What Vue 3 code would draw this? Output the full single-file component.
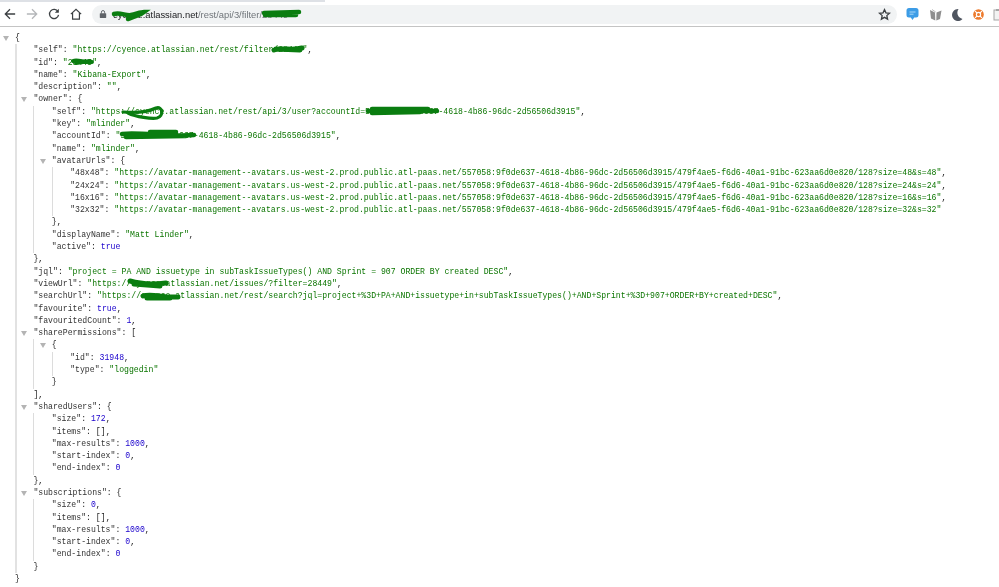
<script setup>
const k = (t) => ({ c: 'key', t })
const s = (t) => ({ c: 'str', t })
const n = (t) => ({ c: 'num', t })
const p = (t) => ({ c: 'pun', t })
const av = 'https://avatar-management--avatars.us-west-2.prod.public.atl-paas.net/557058:9f0de637-4618-4b86-96dc-2d56506d3915/479f4ae5-f6d6-40a1-91bc-623aa6d0e820/128'
const kv = (level, key, val, comma = true, fold = false) => ({
  level, fold,
  parts: [k(`"${key}"`), p(': '), val, ...(comma ? [p(',')] : [])]
})
const ks = (level, key, val, comma = true) => kv(level, key, s(`"${val}"`), comma)
const kn = (level, key, val, comma = true) => kv(level, key, n(val), comma)
const open = (level, key, br) => ({ level, fold: true, parts: [k(`"${key}"`), p(': ' + br)] })
const raw = (level, t, fold = false) => ({ level, fold, parts: [p(t)] })

const rows = [
  raw(0, '{', true),
  ks(1, 'self', 'https://cyence.atlassian.net/rest/filter/28449'),
  ks(1, 'id', '28449'),
  ks(1, 'name', 'Kibana-Export'),
  ks(1, 'description', ''),
  open(1, 'owner', '{'),
  ks(2, 'self', 'https://cyence.atlassian.net/rest/api/3/user?accountId=557058:9f0de637-4618-4b86-96dc-2d56506d3915'),
  ks(2, 'key', 'mlinder'),
  ks(2, 'accountId', '557058:9f0de637-4618-4b86-96dc-2d56506d3915'),
  ks(2, 'name', 'mlinder'),
  open(2, 'avatarUrls', '{'),
  ks(3, '48x48', av + '?size=48&s=48'),
  ks(3, '24x24', av + '?size=24&s=24'),
  ks(3, '16x16', av + '?size=16&s=16'),
  ks(3, '32x32', av + '?size=32&s=32', false),
  raw(2, '},'),
  ks(2, 'displayName', 'Matt Linder'),
  kn(2, 'active', 'true', false),
  raw(1, '},'),
  ks(1, 'jql', 'project = PA AND issuetype in subTaskIssueTypes() AND Sprint = 907 ORDER BY created DESC'),
  ks(1, 'viewUrl', 'https://cyence.atlassian.net/issues/?filter=28449'),
  ks(1, 'searchUrl', 'https://cyence.atlassian.net/rest/search?jql=project+%3D+PA+AND+issuetype+in+subTaskIssueTypes()+AND+Sprint+%3D+907+ORDER+BY+created+DESC'),
  kn(1, 'favourite', 'true'),
  kn(1, 'favouritedCount', '1'),
  open(1, 'sharePermissions', '['),
  raw(2, '{', true),
  kn(3, 'id', '31948'),
  ks(3, 'type', 'loggedin', false),
  raw(2, '}'),
  raw(1, '],'),
  open(1, 'sharedUsers', '{'),
  kn(2, 'size', '172'),
  kv(2, 'items', p('[]')),
  kn(2, 'max-results', '1000'),
  kn(2, 'start-index', '0'),
  kn(2, 'end-index', '0', false),
  raw(1, '},'),
  open(1, 'subscriptions', '{'),
  kn(2, 'size', '0'),
  kv(2, 'items', p('[]')),
  kn(2, 'max-results', '1000'),
  kn(2, 'start-index', '0'),
  kn(2, 'end-index', '0', false),
  raw(1, '}'),
  raw(0, '}')
]

const scribbles = [
  { w: 4.5, d: 'M114 14 C120 12 126 16 131 15 C136 14 141 12 144 12 C140 15 134 17 128 19' },
  { w: 4.5, d: 'M264 13 L299 12 M265 15 L296 15' },
  { w: 5, d: 'M274 50 C282 47 292 51 302 48 M276 49 L300 50' },
  { w: 4, d: 'M73 61 C78 59 84 63 92 62 M76 63 L90 61' },
  { w: 3.2, d: 'M123 112 C135 113 148 112 156 108 C163 106 164 116 157 118 C152 119 136 117 128 113' },
  { w: 4.5, d: 'M368 111 L437 111 M372 109 L428 109 M372 113 L420 112' },
  { w: 4.5, d: 'M122 134 C140 132 170 137 194 135 M126 137 L186 136 M150 132 L176 132' },
  { w: 5, d: 'M130 281 C140 284 150 285 166 283 M134 284 L160 286' },
  { w: 5, d: 'M143 296 C152 293 162 298 178 297 M147 298 L170 298' }
]
</script>

<template>
  <div class="page">
    <div class="tabstrip"><div class="tab"></div></div>
    <header class="toolbar">
      <svg class="ic" width="12" height="12" viewBox="0 0 14 14"><path d="M13 7H2M7 1.500 1.500 7 7 12.500" fill="none" stroke="#3c4043" stroke-width="1.500"/></svg>
      <svg class="ic" width="12" height="12" viewBox="0 0 14 14"><path d="M1 7h11M7 1.500 12.500 7 7 12.500" fill="none" stroke="#b4b6b9" stroke-width="1.500"/></svg>
      <svg class="ic" width="12" height="12" viewBox="0 0 14 14"><path d="M11.600 4.200A5.300 5.300 0 1 0 12.300 8" fill="none" stroke="#3c4043" stroke-width="1.500"/><path d="M12.600 1v4.600H8z" fill="#3c4043"/></svg>
      <svg class="ic" width="12" height="12" viewBox="0 0 14 14"><path d="M1 7.200 7 1.600l6 5.600M3 5.800V13h8V5.800" fill="none" stroke="#3c4043" stroke-width="1.400"/></svg>
      <div class="omni">
        <svg width="8" height="10" viewBox="0 0 10 11"><path d="M3 5V3.200a2 2 0 0 1 4 0V5" fill="none" stroke="#5f6368" stroke-width="1.200"/><rect x="1" y="4.600" width="8" height="5.800" rx=".6" fill="#5f6368"/></svg>
        <span class="url"><span class="host">cyence.atlassian.net</span>/rest/api/3/filter/28449</span>
        <svg class="star" width="13" height="13" viewBox="0 0 24 24"><path d="m12 3 2.700 6 6.500.7-4.900 4.400 1.400 6.400-5.700-3.300-5.700 3.300 1.400-6.400-4.900-4.400 6.500-.7z" fill="none" stroke="#3c4043" stroke-width="2.400"/></svg>
      </div>
      <div class="exts">
        <svg width="13" height="14" viewBox="0 0 13 14"><path d="M3 1h7a2.500 2.500 0 0 1 2.500 2.500v4.500A2.500 2.500 0 0 1 10 10.500H8.200L6.500 13 4.800 10.500H3A2.500 2.500 0 0 1 .5 8V3.500A2.500 2.500 0 0 1 3 1z" fill="#3c9ce6"/><path d="M3.500 5h6M3.500 7.200h4" stroke="#a9d8f8" stroke-width="1"/></svg>
        <svg width="13" height="13" viewBox="0 0 13 13"><path d="M1 2 6 4.500 6.300 12.500 2 10.500zM12.500 2.500 7.500 4.500 7.300 12.500 11 11z" fill="#8f8f8f"/><path d="M3 1.500 6.700 4" stroke="#bbb"/></svg>
        <svg width="12" height="13" viewBox="0 0 12 13"><path d="M7.500 1A6 6 0 1 0 11.500 11 6.500 6.500 0 0 1 7.500 1z" fill="#4f5560"/></svg>
        <svg width="11" height="11" viewBox="0 0 12 12"><circle cx="6" cy="6" r="5.800" fill="#ed7a2c"/><circle cx="6" cy="6" r="2.300" fill="none" stroke="#fff" stroke-width="1.300"/><path d="m2.300 2.300 2.200 2.200m5.200-2.200-2.200 2.200m-5.200 5.200 2.200-2.200m5.200 2.200-2.200-2.200" stroke="#fff" stroke-width="1.300"/></svg>
        <svg width="10" height="13" viewBox="0 0 10 13"><rect x="1" y="2" width="8" height="10" fill="#f2f2f2" stroke="#a5a5a5"/><rect x="3" y="1" width="4" height="2" fill="#a5a5a5"/></svg>
      </div>
    </header>

    <main class="json">
      <div v-for="(r, i) in rows" :key="i" class="row">
        <span v-for="l in r.level" :key="l" class="indent" :class="{ first: l === 1 }"></span>
        <span class="cell">
          <i v-if="r.fold" class="fold"></i>
          <span v-for="(t, j) in r.parts" :key="j" :class="t.c">{{ t.t }}</span>
        </span>
      </div>
    </main>

    <svg class="ink" width="999" height="587" viewBox="0 0 999 587">
      <path v-for="(x, i) in scribbles" :key="i" :d="x.d" :stroke-width="x.w" fill="none" stroke="#0a7d10" stroke-linecap="round" />
    </svg>
  </div>
</template>

<style>
html, body { margin: 0; background: #fff; overflow: hidden; }
</style>

<style scoped>
.page {
  position: relative;
  width: 999px;
  height: 587px;
  overflow: hidden;
  background: #fff;
  filter: blur(0.3px);
}
.tabstrip { height: 2px; background: #fff; }
.tab { width: 325px; height: 2px; background: #dee1e6; }
.toolbar {
  height: 24px;
  display: flex;
  align-items: center;
  padding-left: 4px;
  gap: 10px;
  border-bottom: 1px solid #c4c4c4;
}
.ic { flex: none; }
.omni {
  flex: none;
  width: 805px;
  height: 19px;
  border-radius: 10px;
  background: #f1f3f4;
  display: flex;
  align-items: center;
  padding-left: 7px;
  box-sizing: border-box;
  gap: 6px;
}
.url {
  font: 9.4px "Liberation Sans", sans-serif;
  color: #70757a;
  white-space: nowrap;
}
.host { color: #202124; }
.star { margin-left: auto; margin-right: 6px; }
.exts {
  display: flex;
  align-items: center;
  gap: 9.5px;
  margin-left: -1px;
  flex: none;
}
.json {
  padding: 5px 0 0 15px;
  font: 8.16px/12.3px "Liberation Mono", monospace;
  white-space: pre;
}
.row {
  display: flex;
  height: 12.3px;
}
.indent {
  flex: none;
  width: 18.4px;
  box-sizing: border-box;
  border-left: 1px solid #dcdcdc;
}
.indent.first { border-left: 2px solid #e2e2e2; }
.cell { position: relative; }
.fold {
  position: absolute;
  left: -12px;
  top: 4px;
  width: 0;
  height: 0;
  border-left: 3px solid transparent;
  border-right: 3px solid transparent;
  border-top: 5px solid #b4b4b4;
}
.key { color: #333; }
.str { color: #0b7500; }
.num { color: #1a01cc; }
.pun { color: #222; }
.ink {
  position: absolute;
  left: 0;
  top: 0;
  pointer-events: none;
}
</style>
